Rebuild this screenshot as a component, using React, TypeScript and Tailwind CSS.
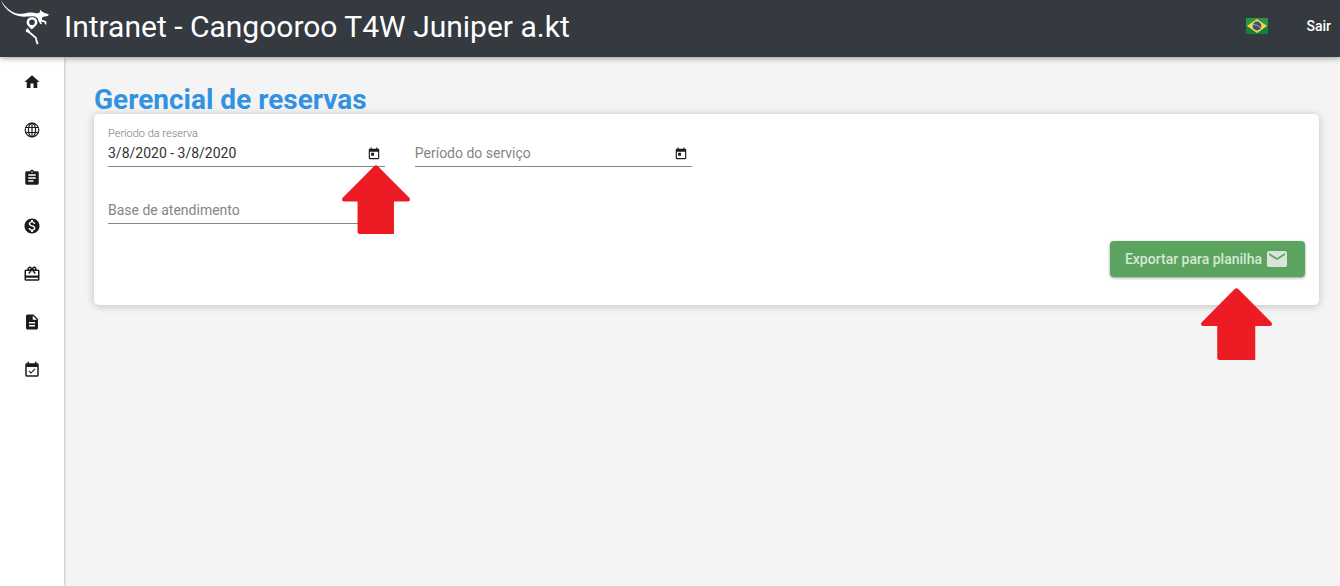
import type { ReactNode } from "react";
import {
  MdAssignment,
  MdDescription,
  MdEmail,
  MdEventAvailable,
  MdHome,
  MdMonetizationOn,
  MdRedeem,
  MdToday,
} from "react-icons/md";

function GlobeIcon({ className }: { className?: string }) {
  return (
    <svg
      viewBox="0 0 18 18"
      className={className}
      fill="none"
      stroke="currentColor"
      strokeWidth="1.200"
      aria-hidden="true"
    >
      <circle cx="9" cy="9" r="6.800" />
      <ellipse cx="9" cy="9" rx="3.600" ry="6.800" />
      <path d="M9 2V16M2.800 6.500H15.200M2.800 11.500H15.200" />
    </svg>
  );
}

const navItems = [
  { label: "Início", icon: MdHome },
  { label: "Idiomas", icon: GlobeIcon },
  { label: "Reservas", icon: MdAssignment },
  { label: "Financeiro", icon: MdMonetizationOn },
  { label: "Ofertas", icon: MdRedeem },
  { label: "Documentos", icon: MdDescription },
  { label: "Agenda", icon: MdEventAvailable },
];

function KangarooLogo() {
  return (
    <svg viewBox="0 0 50 46" className="h-[46px] w-[50px]" aria-hidden="true">
      <path
        fill="#fff"
        d="M1 0C4 6 10 11.500 16 13.200C20 14.300 24 13.500 27 12.900C31 12.200 34 13 36.500 13.300C38 13.300 39 13 39.800 12.600L40 9.800L42 11.600L44.500 13L48.800 14.300L48 16L44.500 16.500L42.300 17.200L41.800 19.800L46.200 21.200L46.400 24.200L45 24.400L44.600 22.600L40.800 21.600L42 24.200L40.500 24L38.600 21.500C38.300 19 37 17.400 34.500 16.600C32 15.800 29.500 16.200 27.500 16.600C22 17.200 16 16 11.500 13C6 9.500 2.500 5 1 0Z"
      />
      <path
        fill="#fff"
        fillRule="evenodd"
        d="M32 16.900A5.400 5.400 0 0 1 37.400 22.300C37.400 25.300 33.800 27.500 31.800 29.600C30 27.600 26.600 25.400 26.600 22.300A5.400 5.400 0 0 1 32 16.900ZM32 19.500A2.800 2.800 0 1 0 32 25.100A2.800 2.800 0 1 0 32 19.500Z"
      />
      <path
        fill="#fff"
        d="M27.300 27.900L29.300 30.200L30.400 32L36.800 37.600L37.200 40L38.600 43.500L36.800 44.400L35.600 41L35.300 38.600L29 33.200L26 31.800L25.800 30.400Z"
      />
    </svg>
  );
}

function BrazilFlag() {
  return (
    <svg viewBox="0 0 22 16" className="h-4 w-[22px]" aria-hidden="true">
      <rect width="22" height="16" fill="#2d9448" />
      <rect y="8" width="22" height="8" fill="#17803a" />
      <path d="M11 1L21 8L11 15L1 8Z" fill="#efdb45" />
      <circle cx="11" cy="8" r="4.400" fill="#414c7c" />
      <path d="M7 6.600Q11.500 6.400 14.800 9.800" fill="none" stroke="#a9b6cc" strokeWidth="0.900" />
    </svg>
  );
}

function Arrow({ className }: { className: string }) {
  return (
    <svg viewBox="0 0 70 71" preserveAspectRatio="none" className={className} aria-hidden="true">
      <path
        fill="#ed1c24"
        d="M33.500 0.800Q35 -0.500 36.500 0.800L69.500 34Q71 37 68 37.500H53.500V71H18Q16 71 16 69V37.500H2Q-1 37 0.500 34Z"
      />
    </svg>
  );
}

type FieldProps = {
  id: string;
  label: string;
  value?: string;
  calendar?: boolean;
  children?: ReactNode;
};

function Field({ id, label, value, calendar, children }: FieldProps) {
  return (
    <div className="relative pt-3">
      <div className="flex h-7 items-center border-b border-[#858585] pr-1">
        <input
          id={id}
          type="text"
          defaultValue={value}
          placeholder=" "
          className="peer min-w-0 flex-1 bg-transparent text-sm text-[#333] outline-none"
        />
        <label
          htmlFor={id}
          className="absolute top-px left-0 cursor-text text-[11px] leading-3 font-light text-[#777] peer-placeholder-shown:top-4 peer-placeholder-shown:text-sm peer-placeholder-shown:leading-5 peer-placeholder-shown:font-normal peer-placeholder-shown:text-[#858585]"
        >
          {label}
        </label>
        {calendar && (
          <button type="button" aria-label="Abrir calendário" className="pt-0.5 text-[#1c1c1c]">
            <MdToday className="size-[14px]" />
          </button>
        )}
      </div>
      {children}
    </div>
  );
}

export default function App() {
  return (
    <div className="flex min-h-screen flex-col bg-[#f4f4f4] font-['Roboto',sans-serif]">
      <header className="relative z-10 flex h-[57px] items-start bg-[#343a40] text-white shadow-[0_1px_6px_rgba(0,0,0,0.4)]">
        <a href="#inicio" aria-label="Cangooroo" className="w-16 shrink-0">
          <KangarooLogo />
        </a>
        <p className="flex-1 pt-[9px] text-3xl leading-9">Intranet - Cangooroo T4W Juniper a.kt</p>
        <div className="flex items-center gap-[38px] self-stretch pr-[9px] pb-[5px]">
          <button type="button" aria-label="Português (Brasil)">
            <BrazilFlag />
          </button>
          <a href="#sair" className="text-sm font-medium">
            Sair
          </a>
        </div>
      </header>
      <div className="flex flex-1">
        <nav className="w-16 shrink-0 bg-white pt-px shadow-[0_0_3px_rgba(0,0,0,0.35)]">
          <ul>
            {navItems.map(({ label, icon: Icon }) => (
              <li key={label}>
                <a
                  href="#menu"
                  aria-label={label}
                  className="flex h-12 items-center justify-center text-[#1c1c1c]"
                >
                  <Icon className="size-[18px]" />
                </a>
              </li>
            ))}
          </ul>
        </nav>
        <main className="min-w-0 flex-1 pt-[27px] pr-[21px] pl-[30px]">
          <h1 className="text-[28px] leading-8 font-bold text-[#3292e2]">Gerencial de reservas</h1>
          <form className="-mt-0.5 rounded-[5px] bg-white px-[14px] pt-[13px] pb-7 shadow-[0_1px_8px_rgba(0,0,0,0.22)]">
            <div className="grid grid-cols-4 gap-x-[30px] gap-y-[17px]">
              <Field id="reserva" label="Período da reserva" value="3/8/2020 - 3/8/2020" calendar>
                <Arrow className="absolute top-[38px] -right-[25px] z-10 h-[69px] w-[68px]" />
              </Field>
              <Field id="servico" label="Período do serviço" calendar />
              <div className="col-start-1">
                <Field id="base" label="Base de atendimento" />
              </div>
            </div>
            <div className="mt-[17px] flex justify-end">
              <div className="relative">
                <button
                  type="button"
                  className="flex h-9 items-center gap-[3px] rounded-sm bg-[#5ba45f] pr-4 pl-[15px] text-sm font-medium text-[#d5e8d6] shadow-[0_1px_3px_rgba(0,0,0,0.4)]"
                >
                  Exportar para planilha
                  <MdEmail className="size-6 text-[#dbe3dc]" />
                </button>
                <Arrow className="absolute top-[47px] right-[33px] h-[72px] w-[71px]" />
              </div>
            </div>
          </form>
        </main>
      </div>
    </div>
  );
}
